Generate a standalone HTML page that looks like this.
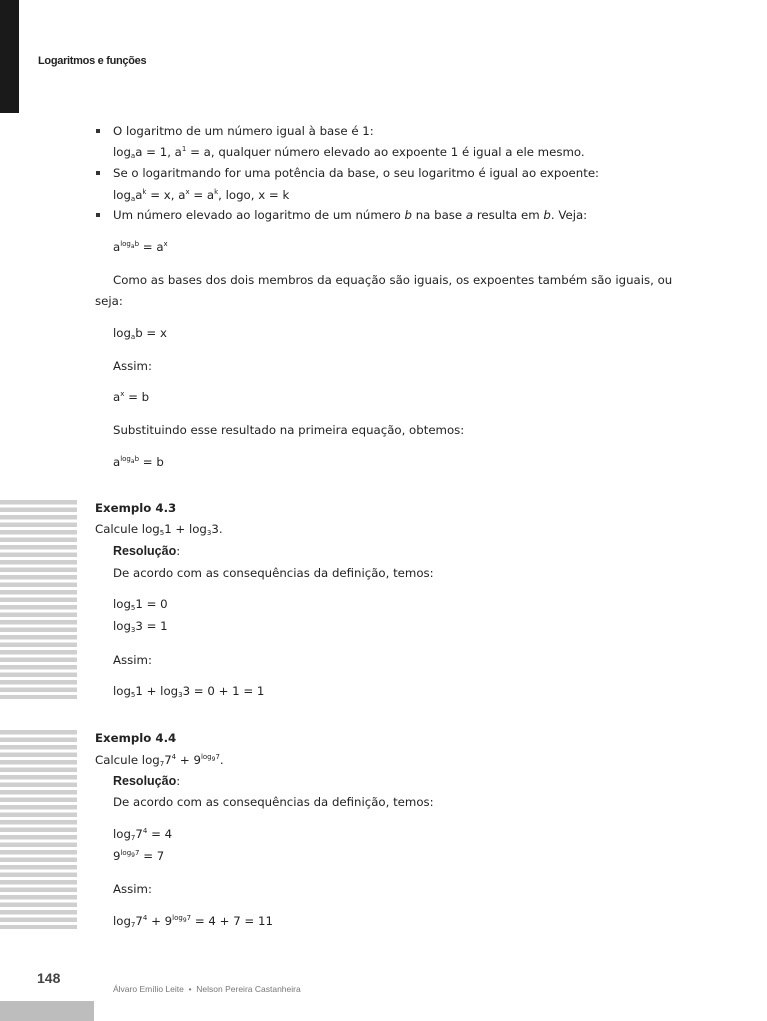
<!DOCTYPE html>
<html><head><meta charset="utf-8"><style>
body{margin:0;background:#fff;}
#p{position:relative;width:767px;height:1021px;overflow:hidden;background:#fff;font-family:"DejaVu Sans","Liberation Sans",sans-serif;font-size:11.75px;color:#222;}
.l{position:absolute;white-space:nowrap;line-height:16px;}
sub{font-size:7px;vertical-align:-2px;line-height:0;}
sup{font-size:7px;vertical-align:5px;line-height:0;}
sup sub{font-size:6px;vertical-align:-2px;}
.b{font-weight:bold;}
.bul{position:absolute;width:4px;height:4px;background:#333;left:96px;}
.st{position:absolute;left:0;width:77px;background:repeating-linear-gradient(to bottom,#cfcfcf 0,#cfcfcf 4.5px,#fff 4.5px,#fff 7.5px);}
</style></head><body><div id="p">
<div style="position:absolute;left:0;top:0;width:19px;height:113px;background:#1a1a1a"></div>
<div class="l" style="left:38px;top:53px;font-family:'Liberation Sans',sans-serif;font-size:11px;font-weight:bold;letter-spacing:-0.3px">Logaritmos e funções</div>

<div class="bul" style="top:129px"></div>
<div class="l" style="left:113px;top:123px">O logaritmo de um número igual à base é 1:</div>
<div class="l" style="left:113px;top:144px">log<sub>a</sub>a = 1, a<sup>1</sup> = a, qualquer número elevado ao expoente 1 é igual a ele mesmo.</div>
<div class="bul" style="top:171px"></div>
<div class="l" style="left:113px;top:165px">Se o logaritmando for uma potência da base, o seu logaritmo é igual ao expoente:</div>
<div class="l" style="left:113px;top:187px">log<sub>a</sub>a<sup>k</sup> = x, a<sup>x</sup> = a<sup>k</sup>, logo, x = k</div>
<div class="bul" style="top:213px"></div>
<div class="l" style="left:113px;top:207px">Um número elevado ao logaritmo de um número <i>b</i> na base <i>a</i> resulta em <i>b</i>. Veja:</div>
<div class="l" style="left:113px;top:239px">a<sup>log<sub>a</sub>b</sup> = a<sup>x</sup></div>
<div class="l" style="left:113px;top:272px">Como as bases dos dois membros da equação são iguais, os expoentes também são iguais, ou</div>
<div class="l" style="left:95px;top:293px">seja:</div>
<div class="l" style="left:113px;top:325px">log<sub>a</sub>b = x</div>
<div class="l" style="left:113px;top:358px">Assim:</div>
<div class="l" style="left:113px;top:389px">a<sup>x</sup> = b</div>
<div class="l" style="left:113px;top:422px">Substituindo esse resultado na primeira equação, obtemos:</div>
<div class="l" style="left:113px;top:454px">a<sup>log<sub>a</sub>b</sup> = b</div>

<div class="st" style="top:500px;height:199px"></div>
<div class="l b" style="left:95px;top:500px">Exemplo 4.3</div>
<div class="l" style="left:95px;top:521px">Calcule log<sub>5</sub>1 + log<sub>3</sub>3.</div>
<div class="l" style="left:113px;top:543px"><span class="b" style="font-family:'Liberation Sans',sans-serif;font-size:12.5px">Resolução</span>:</div>
<div class="l" style="left:113px;top:565px">De acordo com as consequências da definição, temos:</div>
<div class="l" style="left:113px;top:596px">log<sub>5</sub>1 = 0</div>
<div class="l" style="left:113px;top:618px">log<sub>3</sub>3 = 1</div>
<div class="l" style="left:113px;top:652px">Assim:</div>
<div class="l" style="left:113px;top:683px">log<sub>5</sub>1 + log<sub>3</sub>3 = 0 + 1 = 1</div>

<div class="st" style="top:730px;height:199px"></div>
<div class="l b" style="left:95px;top:730px">Exemplo 4.4</div>
<div class="l" style="left:95px;top:752px">Calcule log<sub>7</sub>7<sup>4</sup> + 9<sup>log<sub>9</sub>7</sup>.</div>
<div class="l" style="left:113px;top:773px"><span class="b" style="font-family:'Liberation Sans',sans-serif;font-size:12.5px">Resolução</span>:</div>
<div class="l" style="left:113px;top:794px">De acordo com as consequências da definição, temos:</div>
<div class="l" style="left:113px;top:826px">log<sub>7</sub>7<sup>4</sup> = 4</div>
<div class="l" style="left:113px;top:848px">9<sup>log<sub>9</sub>7</sup> = 7</div>
<div class="l" style="left:113px;top:881px">Assim:</div>
<div class="l" style="left:113px;top:913px">log<sub>7</sub>7<sup>4</sup> + 9<sup>log<sub>9</sub>7</sup> = 4 + 7 = 11</div>

<div class="l" style="left:37px;top:970px;font-family:'Liberation Sans',sans-serif;font-size:14px;font-weight:bold;color:#444">148</div>
<div class="l" style="left:113px;top:981px;font-family:'Liberation Sans',sans-serif;font-size:8.5px;color:#777">Álvaro Emílio Leite &nbsp;•&nbsp; Nelson Pereira Castanheira</div>
<div style="position:absolute;left:0;top:1001px;width:94px;height:20px;background:#bdbdbd"></div>
</div></body></html>
